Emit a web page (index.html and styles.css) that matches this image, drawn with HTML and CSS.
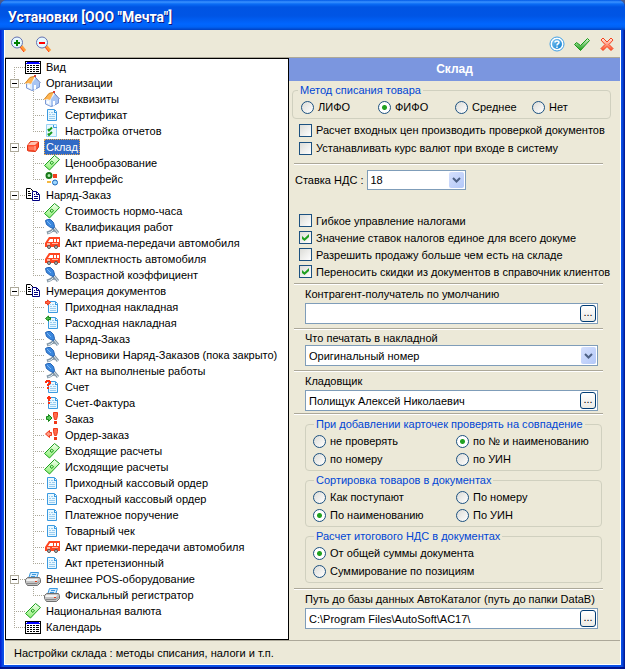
FILE: index.html
```html
<!DOCTYPE html>
<html lang="ru">
<head>
<meta charset="utf-8">
<title>Установки</title>
<link rel="stylesheet" href="styles.css">
</head>
<body>
<svg class="defs" aria-hidden="true">
  <defs>
    <linearGradient id="g-money" x1="0" y1="0" x2="0" y2="1"><stop offset="0" stop-color="#f6fff2"/><stop offset="1" stop-color="#8af070"/></linearGradient>
    <linearGradient id="g-ok" x1="0" y1="0" x2="0" y2="1"><stop offset="0" stop-color="#d8f5d0"/><stop offset="1" stop-color="#179a14"/></linearGradient>
    <linearGradient id="g-no" x1="0" y1="0" x2="0" y2="1"><stop offset="0" stop-color="#fff0ea"/><stop offset="1" stop-color="#ff4a22"/></linearGradient>
    <linearGradient id="g-help" x1="0" y1="0" x2="1" y2="1"><stop offset="0" stop-color="#7cc4f2"/><stop offset="1" stop-color="#0f7ed0"/></linearGradient>
  </defs>
  <symbol id="i-calendar" viewBox="0 0 16 16">
    <path d="M0 2h16v13H0z"/><path fill="#fff" d="M1 5h14v9H1z"/><path fill="#00f" d="M1 3h14v2H1z"/><path fill="#fff" d="M1 3h1v1H1zM14 3h1v1h-1z"/>
    <path d="M2 6h2v1H2zM5 6h2v1H5zM8 6h2v1H8zM11 6h3v1h-3zM2 8h2v1H2zM5 8h2v1H5zM8 8h2v1H8zM11 8h3v1h-3zM2 10h2v1H2zM5 10h2v1H5zM8 10h2v1H8zM11 10h3v1h-3zM2 12h2v1H2zM5 12h2v1H5zM8 12h2v1H8zM11 12h3v1h-3z"/>
  </symbol>
  <symbol id="i-house" viewBox="0 0 16 16">
    <path fill="#e4effd" d="M1 8l5-1 5-5 4 6v4l-7 4-7-3z"/><path fill="#a9c5f2" d="M7 8l4-5 4 5v4l-7 4H7z"/><path fill="none" stroke="#7c98d4" d="M1.500 9v4L7 15.500l7.500-3.500V8"/>
    <path fill="#ffb450" d="M0 8l5-6 5-1-4 8-3-1-2 1z"/><path fill="none" stroke="#d08a30" d="M.500 8L5 2.500l4-1"/><path fill="none" stroke="#6478b4" d="M10 2l5.500 6"/><path fill="#d84030" d="M9 0h2v2H9z"/><path fill="#fff" d="M9 10h2v4l-2 1zM3 10h2v3l-2-1z"/>
  </symbol>
  <symbol id="i-doc" viewBox="0 0 16 16">
    <path fill="#e9f8ff" stroke="#3b9ae0" d="M3.500 2.500h7l2 2v9h-9z"/><path fill="#3b9ae0" d="M10 3h1v2h2v1h-3z"/><path fill="none" stroke="#9bcdf0" d="M5 5.500h1M7 5.500h2M5 7.500h2M8 7.500h3M5 9.500h6M5 11.500h6"/>
  </symbol>
  <symbol id="i-docin" viewBox="0 0 16 16"><use href="#i-doc" x="1" y="0"/><path fill="#ff6848" stroke="#f03818" d="M3.500 1v1.500h-2v2h2V6l3-2.500z"/></symbol>
  <symbol id="i-docout" viewBox="0 0 16 16"><use href="#i-doc" x="1" y="0"/><path fill="#4cc04c" stroke="#168516" d="M4.500 1v1.500h2v2h-2V6l-3-2.500z"/></symbol>
  <symbol id="i-docq" viewBox="0 0 16 16"><use href="#i-doc" x="1" y="0"/><path fill="#ff3010" d="M2 1h4v1h1v3H6v1H5v1H3V5h1V4h1V3H3v1H1V2h1zM3 8h2v2H3z"/></symbol>
  <symbol id="i-docex" viewBox="0 0 16 16"><use href="#i-doc" x="1" y="0"/><path fill="#ff3010" d="M4 1h2v1h1v2H6v2H4V4H3V2h1zM4 7h2v2H4z"/></symbol>
  <symbol id="i-report" viewBox="0 0 16 16"><path fill="#e9f8ff" stroke="#9ad4f5" d="M2.500 1.500h10v12h-10z"/><path fill="none" stroke="#3b9ae0" d="M9.500 2v2.500H13"/><path fill="none" stroke="#189a20" stroke-width="2" d="M4 6l1 1.500 3-3M4 10.500L5 12l3-3"/></symbol>
  <symbol id="i-box" viewBox="0 0 16 16"><path fill="#ff4c2c" stroke="#e03010" d="M2.500 6.500l3-4 8 .500v5l-3 4.500-7-.500-1-.500z"/><path fill="#ffc0ae" d="M3 6l3-3h7l-3 3z"/><path fill="none" stroke="#ffd6ca" d="M10 7v4.500"/><path fill="#ff7558" d="M3 7.500h6V11H4z"/></symbol>
  <symbol id="i-money" viewBox="0 0 16 16"><path fill="url(#g-money)" stroke="#1ca01c" d="M.500 10.500l10-10 5 4-10 10.500z"/><path fill="none" stroke="#1ca01c" d="M7.500 6l2 1.500-1.500 2L6 8z"/></symbol>
  <symbol id="i-parts" viewBox="0 0 16 16"><circle cx="5" cy="4.500" r="2.500" fill="#b4ecb0" stroke="#187a18" stroke-width="2"/><path fill="#f04020" d="M9 3h4v4H9z"/><path fill="#f5b840" d="M3 10h4v2H3z"/><circle cx="11" cy="11.500" r="2.500" fill="#9fd8ff" stroke="#1b66b8"/></symbol>
  <symbol id="i-copy" viewBox="0 0 16 16"><path fill="#fff" stroke="#000" d="M1.500 1.500h4l3 3v7h-7z"/><path fill="none" stroke="#000" d="M3 4.500h2M3 6.500h3M3 8.500h3"/><path fill="#fff" stroke="#000080" d="M7.500 4.500h4l3 3v6h-7z"/><path fill="none" stroke="#000080" d="M11.500 5v2.500H14M9 7.500h1M9 9.500h4M9 11.500h4"/></symbol>
  <symbol id="i-tools" viewBox="0 0 16 16"><path fill="none" stroke="#8497a6" stroke-width="3" d="M9 8l5 6M3 14l3-1 3-2 2 1"/><path fill="none" stroke="#dce7ee" d="M10 9l4 5M4 14l3-1 2-2"/><path fill="#3b88de" stroke="#2262b5" d="M1.500 1.500l2-1h3l3 3 1 4-1 2-3-1-4-3z"/><path fill="none" stroke="#7fb8f5" d="M3 2l4 4"/></symbol>
  <symbol id="i-van" viewBox="0 0 16 16"><path fill="#ff4520" d="M5 2h11v10H1V8z"/><path fill="#fff" d="M6 4h3v3H4zM10 4h2v3h-2zM13 4h2v3h-2z"/><path fill="#ffb6a2" d="M3 8h3v2H3zM8 8h6v1H8z"/><circle cx="5" cy="12" r="1.500" fill="#bbb" stroke="#555"/><circle cx="12" cy="12" r="1.500" fill="#bbb" stroke="#555"/></symbol>
  <symbol id="i-order" viewBox="0 0 16 16"><path fill="#58c858" stroke="#168516" d="M2.500 5.500h2v-2L8 7l-3.500 3.500v-2h-2z"/><path fill="#ff6a4a" stroke="#f03818" d="M9.500 1.500h4v3l-1 4h-2l-1-4z"/><path fill="#f03818" d="M10 10h3v3h-3z"/></symbol>
  <symbol id="i-orderout" viewBox="0 0 16 16"><path fill="#ff9a84" stroke="#f03818" d="M7.500 5.500h-2v-2L1.500 7l4 3.500v-2h2z"/><path fill="#ff6a4a" stroke="#f03818" d="M9.500 1.500h4v3l-1 4h-2l-1-4z"/><path fill="#f03818" d="M10 10h3v3h-3z"/></symbol>
  <symbol id="i-printer" viewBox="0 0 16 16"><path fill="#cfeaff" stroke="#3b9ae0" d="M5.500 1.500h8l-2 6h-8z"/><path stroke="#3b9ae0" d="M7 3.500h4M6 5.500h4"/><path fill="#c5c5c5" stroke="#707070" d="M.500 8.500l2-2h12l1 2v3l-3 3h-10l-2-3z"/><path fill="#f2f2f2" d="M2 8h11l-1 2H1z"/><path fill="none" stroke="#888" d="M2 12.500h10l2-2"/><path fill="#e03818" d="M10 10h2v1h-2z"/></symbol>
  <symbol id="i-zoomin" viewBox="0 0 16 16"><path stroke="#ff9a38" stroke-width="3" d="M10 10l4 5"/><path stroke="#ff3c10" d="M9 11l4 5"/><circle cx="6" cy="6.500" r="5.500" fill="#e6f8ff" stroke="#6572b0"/><path fill="#008000" d="M5 4h2v2h2v2H7v2H5V8H3V6h2z"/></symbol>
  <symbol id="i-zoomout" viewBox="0 0 16 16"><path stroke="#ff9a38" stroke-width="3" d="M10 10l4 5"/><path stroke="#ff3c10" d="M9 11l4 5"/><circle cx="6" cy="6.500" r="5.500" fill="#e6f8ff" stroke="#6572b0"/><path fill="#f00" d="M3 6h6v2H3z"/></symbol>
  <symbol id="i-help" viewBox="0 0 16 16"><circle cx="8" cy="8" r="7" fill="#fff" stroke="#3f9ee2"/><circle cx="8" cy="8" r="5" fill="url(#g-help)"/><path fill="none" stroke="#fff" stroke-width="1.500" d="M6 6.500C6 4.500 10 4.500 10 6.500 10 8 8 7.500 8 9.500M8 10.500V12"/></symbol>
  <symbol id="i-ok" viewBox="0 0 16 16"><path fill="url(#g-ok)" stroke="#169a16" d="M.500 8.500l2-2 4 3 7-7 2 2-9 10z"/></symbol>
  <symbol id="i-no" viewBox="0 0 16 16"><path fill="url(#g-no)" stroke="#f5421c" d="M2 4l2-2 4 4 4-4 2 2-4 4.500 4 4-2 2-4-4-4 4-2-2 4-4z"/></symbol>
</svg>

<div class="window">
  <header class="titlebar"><h1>Установки [ООО "Мечта"]</h1></header>
  <div class="client">
    <div class="toolbar">
      <button class="tool" type="button" aria-label="Развернуть"><svg><use href="#i-zoomin"/></svg></button>
      <button class="tool" type="button" aria-label="Свернуть"><svg><use href="#i-zoomout"/></svg></button>
      <span class="spacer"></span>
      <button class="tool" type="button" aria-label="Справка"><svg><use href="#i-help"/></svg></button>
      <button class="tool" type="button" aria-label="Применить"><svg><use href="#i-ok"/></svg></button>
      <button class="tool" type="button" aria-label="Закрыть"><svg><use href="#i-no"/></svg></button>
    </div>

    <div class="main">
      <nav class="tree">
        <ul>
          <li><div class="row"><svg><use href="#i-calendar"/></svg><span>Вид</span></div></li>
          <li><div class="row"><button class="toggle" type="button" aria-label="Свернуть ветку"></button><svg><use href="#i-house"/></svg><span>Организации</span></div>
            <ul>
              <li><div class="row"><svg><use href="#i-house"/></svg><span>Реквизиты</span></div></li>
              <li><div class="row"><svg><use href="#i-doc"/></svg><span>Сертификат</span></div></li>
              <li><div class="row"><svg><use href="#i-report"/></svg><span>Настройка отчетов</span></div></li>
            </ul>
          </li>
          <li><div class="row"><button class="toggle" type="button" aria-label="Свернуть ветку"></button><svg><use href="#i-box"/></svg><span class="selected">Склад</span></div>
            <ul>
              <li><div class="row"><svg><use href="#i-money"/></svg><span>Ценообразование</span></div></li>
              <li><div class="row"><svg><use href="#i-parts"/></svg><span>Интерфейс</span></div></li>
            </ul>
          </li>
          <li><div class="row"><button class="toggle" type="button" aria-label="Свернуть ветку"></button><svg><use href="#i-copy"/></svg><span>Наряд-Заказ</span></div>
            <ul>
              <li><div class="row"><svg><use href="#i-money"/></svg><span>Стоимость нормо-часа</span></div></li>
              <li><div class="row"><svg><use href="#i-tools"/></svg><span>Квалификация работ</span></div></li>
              <li><div class="row"><svg><use href="#i-van"/></svg><span>Акт приема-передачи автомобиля</span></div></li>
              <li><div class="row"><svg><use href="#i-van"/></svg><span>Комплектность автомобиля</span></div></li>
              <li><div class="row"><svg><use href="#i-tools"/></svg><span>Возрастной коэффициент</span></div></li>
            </ul>
          </li>
          <li><div class="row"><button class="toggle" type="button" aria-label="Свернуть ветку"></button><svg><use href="#i-copy"/></svg><span>Нумерация документов</span></div>
            <ul>
              <li><div class="row"><svg><use href="#i-docin"/></svg><span>Приходная накладная</span></div></li>
              <li><div class="row"><svg><use href="#i-docout"/></svg><span>Расходная накладная</span></div></li>
              <li><div class="row"><svg><use href="#i-tools"/></svg><span>Наряд-Заказ</span></div></li>
              <li><div class="row"><svg><use href="#i-tools"/></svg><span>Черновики Наряд-Заказов (пока закрыто)</span></div></li>
              <li><div class="row"><svg><use href="#i-tools"/></svg><span>Акт на выполненые работы</span></div></li>
              <li><div class="row"><svg><use href="#i-docq"/></svg><span>Счет</span></div></li>
              <li><div class="row"><svg><use href="#i-docex"/></svg><span>Счет-Фактура</span></div></li>
              <li><div class="row"><svg><use href="#i-order"/></svg><span>Заказ</span></div></li>
              <li><div class="row"><svg><use href="#i-orderout"/></svg><span>Ордер-заказ</span></div></li>
              <li><div class="row"><svg><use href="#i-money"/></svg><span>Входящие расчеты</span></div></li>
              <li><div class="row"><svg><use href="#i-money"/></svg><span>Исходящие расчеты</span></div></li>
              <li><div class="row"><svg><use href="#i-doc"/></svg><span>Приходный кассовый ордер</span></div></li>
              <li><div class="row"><svg><use href="#i-doc"/></svg><span>Расходный кассовый ордер</span></div></li>
              <li><div class="row"><svg><use href="#i-doc"/></svg><span>Платежное поручение</span></div></li>
              <li><div class="row"><svg><use href="#i-doc"/></svg><span>Товарный чек</span></div></li>
              <li><div class="row"><svg><use href="#i-van"/></svg><span>Акт приемки-передачи автомобиля</span></div></li>
              <li><div class="row"><svg><use href="#i-doc"/></svg><span>Акт претензионный</span></div></li>
            </ul>
          </li>
          <li><div class="row"><button class="toggle" type="button" aria-label="Свернуть ветку"></button><svg><use href="#i-printer"/></svg><span>Внешнее POS-оборудование</span></div>
            <ul>
              <li><div class="row"><svg><use href="#i-printer"/></svg><span>Фискальный регистратор</span></div></li>
            </ul>
          </li>
          <li><div class="row"><svg><use href="#i-money"/></svg><span>Национальная валюта</span></div></li>
          <li><div class="row"><svg><use href="#i-calendar"/></svg><span>Календарь</span></div></li>
        </ul>
      </nav>

      <form class="panel">
        <h2>Склад</h2>
        <fieldset class="group group-wide">
          <legend>Метод списания товара</legend>
          <div class="options options-four">
            <label><input type="radio" name="method">ЛИФО</label>
            <label><input type="radio" name="method" checked>ФИФО</label>
            <label><input type="radio" name="method">Среднее</label>
            <label><input type="radio" name="method">Нет</label>
          </div>
        </fieldset>
        <div class="checks">
          <label><input type="checkbox">Расчет входных цен производить проверкой документов</label>
          <label><input type="checkbox">Устанавливать курс валют при входе в систему</label>
        </div>
        <hr class="after-checks">
        <div class="rate">
          <label for="vat">Ставка НДС :</label>
          <div class="combo combo-small">
            <select id="vat"><option>18</option></select>
            <span class="arrow"><svg viewBox="0 0 9 6"><path d="M1 1l3.500 3.500L8 1"/></svg></span>
          </div>
        </div>
        <div class="checks checks-tight">
          <label><input type="checkbox">Гибкое управление налогами</label>
          <label><input type="checkbox" checked>Значение ставок налогов единое для всего докуме</label>
          <label><input type="checkbox">Разрешить продажу больше чем есть на складе</label>
          <label><input type="checkbox" checked>Переносить скидки из документов в справочник клиентов</label>
        </div>
        <hr class="after-tight">
        <div class="field">
          <label for="contractor">Контрагент-получатель по умолчанию</label>
          <div class="lookup"><input id="contractor" type="text"><button type="button">...</button></div>
        </div>
        <hr>
        <div class="field field-snug">
          <label for="print">Что печатать в накладной</label>
          <div class="combo">
            <select id="print"><option>Оригинальный номер</option></select>
            <span class="arrow"><svg viewBox="0 0 9 6"><path d="M1 1l3.500 3.500L8 1"/></svg></span>
          </div>
        </div>
        <hr>
        <div class="field">
          <label for="keeper">Кладовщик</label>
          <div class="lookup"><input id="keeper" type="text" value="Полищук Алексей Николаевич"><button type="button">...</button></div>
        </div>
        <hr class="close">
        <div class="groups">
          <fieldset class="group">
            <legend>При добавлении карточек проверять на совпадение</legend>
            <div class="options">
              <label><input type="radio" name="match">не проверять</label>
              <label><input type="radio" name="match" checked>по № и наименованию</label>
              <label><input type="radio" name="match">по номеру</label>
              <label><input type="radio" name="match">по УИН</label>
            </div>
          </fieldset>
          <fieldset class="group">
            <legend>Сортировка товаров в документах</legend>
            <div class="options">
              <label><input type="radio" name="sort">Как поступают</label>
              <label><input type="radio" name="sort">По номеру</label>
              <label><input type="radio" name="sort" checked>По наименованию</label>
              <label><input type="radio" name="sort">По УИН</label>
            </div>
          </fieldset>
          <fieldset class="group">
            <legend>Расчет итогового НДС в документах</legend>
            <div class="options options-one">
              <label><input type="radio" name="total" checked>От общей суммы документа</label>
              <label><input type="radio" name="total">Суммирование по позициям</label>
            </div>
          </fieldset>
        </div>
        <hr>
        <div class="field">
          <label for="path">Путь до базы данных АвтоКаталог (путь до папки DataB)</label>
          <div class="lookup"><input id="path" type="text" value="C:\Program Files\AutoSoft\AC17\"><button type="button">...</button></div>
        </div>
      </form>
    </div>
    <footer class="status">Настройки склада : методы списания, налоги и т.п.</footer>
  </div>
</div>
</body>
</html>
```
FILE: styles.css
```css
* { box-sizing: border-box; }
body {
  margin: 0;
  background: #4a5a8a;
  color: #000;
  font: 11px/14px "Liberation Sans", Arial, sans-serif;
}
.defs { position: absolute; width: 0; height: 0; }
.window {
  display: flex;
  flex-direction: column;
  min-height: 100vh;
  padding: 0 4px 4px;
  border-radius: 7px 7px 0 0;
  background: linear-gradient(90deg, #0019cf 0, #0a50e8 3px, #0a50e8 calc(100% - 3px), #00138c 100%);
  box-shadow: inset 0 -2px #00138c;
}
.titlebar {
  display: flex;
  align-items: center;
  height: 30px;
  margin: 0 -4px;
  padding: 4px 8px 0;
  border-radius: 7px 7px 0 0;
  background: linear-gradient(#0058e6 0, #3b92ff 2px, #0a6cf5 4px, #0054e3 7px, #0055e5 16px, #0066ff 24px, #0062f5 27px, #0040c0 30px);
}
h1 {
  margin: 0;
  color: #fff;
  font: bold 14px/18px Roboto, sans-serif;
  text-shadow: 1px 1px #0a1883;
}
.client {
  flex: 1;
  display: flex;
  flex-direction: column;
  border: solid #fff;
  border-width: 0 1px 1px;
  background: #ece9d8;
}
.toolbar {
  display: flex;
  align-items: center;
  gap: 9px;
  height: 28px;
  padding: 0 5px 0 6px;
  border-bottom: 1px solid #aca899;
}
.spacer { flex: 1; }
.tool { padding: 0; border: 0; background: none; }
.tool svg, .row svg { display: block; width: 16px; height: 16px; flex: none; }

.main { flex: 1; display: flex; }
.tree {
  width: 284px;
  flex: none;
  padding-bottom: 4px;
  border: 1px solid #000;
  background: #fff;
}
.tree ul { margin: 0; padding: 0; list-style: none; }
.tree li ul { margin-left: 19px; }
.tree li {
  background: repeating-linear-gradient(#aca899 0 1px, transparent 1px 2px) 8px 0 / 1px 100% no-repeat;
}
.tree li:last-child { background-size: 1px 9px; }
.tree > ul > li:first-child { background-position: 8px 8px; background-size: 1px 8px; }
.row {
  display: flex;
  align-items: center;
  height: 16px;
  padding-left: 19px;
  background: repeating-linear-gradient(90deg, #aca899 0 1px, transparent 1px 2px) 8px 8px / 11px 1px no-repeat;
}
.row:has(.toggle) { padding-left: 4px; }
.toggle {
  width: 9px;
  height: 9px;
  margin-right: 6px;
  padding: 0;
  border: 1px solid #aca899;
  background: linear-gradient(#000, #000) center / 5px 1px no-repeat #fff;
}
.row span { margin-left: 3px; padding: 0 2px; line-height: 16px; white-space: nowrap; }
.row .selected { background: #316ac5; color: #fff; outline: 1px dotted #e8a850; outline-offset: -1px; }

.panel { flex: 1; min-width: 0; }
h2 {
  margin: 0;
  background: #7b96df;
  color: #fff;
  font: bold 12px/23px "Liberation Sans", Arial, sans-serif;
  text-align: center;
}
label { white-space: nowrap; }
.group {
  min-width: 0;
  margin: 0;
  padding: 1px 7px 2px;
  border: 1px solid #d0d0bf;
  border-radius: 4px;
}
.group-wide { margin: 2px 9px 0 3px; padding: 1px 8px 2px; }
legend { margin-left: 1px; padding: 0 2px; color: #0046d5; }
.group-wide legend { margin-left: -3px; }
.options { display: grid; grid-template-columns: 143px 1fr; }
.options-four { grid-template-columns: repeat(3, 77px) 1fr; }
.options-one { grid-template-columns: 1fr; }
.options label, .checks label { display: flex; align-items: center; height: 18px; gap: 4px; }
input[type="radio"], input[type="checkbox"] {
  appearance: none;
  width: 13px;
  height: 13px;
  flex: none;
  margin: 0;
  border: 1px solid #1c5180;
  background: linear-gradient(135deg, #dcdcd7, #fff);
}
input[type="radio"] { border-radius: 50%; }
input[type="radio"]:checked { background: radial-gradient(circle, #21a121 0 2px, #fff 3px); }
input[type="checkbox"]:checked::before {
  content: "";
  display: block;
  width: 7px;
  height: 7px;
  margin: 2px;
  background: #21a121;
  clip-path: polygon(0 28%, 36% 60%, 100% 0, 100% 42%, 36% 100%, 0 70%);
}
.checks { margin: 2px 0 0 10px; }
.checks-tight { margin-top: 22px; }
.checks-tight label { height: 17px; }
hr {
  height: 2px;
  margin: 4px 17px 0 5px;
  border: solid;
  border-width: 1px 0;
  border-color: #aca899 #fff #fff;
}
hr.after-checks { margin-top: 6px; }
hr.after-tight { margin-top: 3px; }
hr.close { margin-top: 2px; }
.rate { display: flex; align-items: center; gap: 3px; margin: 5px 0 0 6px; }
.field { display: flex; flex-direction: column; gap: 2px; margin: 2px 22px 0 16px; }
.field-snug { gap: 0; margin-top: 1px; }
.combo, .lookup { position: relative; height: 21px; border: 1px solid #7f9db9; background: #fff; }
.combo-small { width: 99px; height: 20px; }
select, input[type="text"] {
  appearance: none;
  display: block;
  width: 100%;
  height: 100%;
  margin: 0;
  padding: 0 20px 0 3px;
  border: 0;
  outline: 0;
  background: none;
  color: #000;
  font: inherit;
}
.arrow {
  position: absolute;
  top: 1px;
  right: 1px;
  bottom: 1px;
  width: 15px;
  display: grid;
  place-items: center;
  border-radius: 2px;
  background: linear-gradient(135deg, #d5e0fd, #b3c8f8);
  pointer-events: none;
}
.arrow svg { width: 9px; height: 6px; }
.arrow path { fill: none; stroke: #4d6185; stroke-width: 2; }
.lookup button {
  position: absolute;
  top: 1px;
  right: 1px;
  bottom: 1px;
  width: 16px;
  padding: 0 0 4px;
  border: 1px solid #003c74;
  border-radius: 3px;
  background: linear-gradient(#fff, #ecebe5);
  font: inherit;
  line-height: 10px;
}
.groups { display: grid; gap: 2px; margin: 2px 18px 0 16px; }
.groups + hr { margin-top: 5px; }
.status { height: 24px; padding: 0 9px; border-top: 1px solid #aca899; line-height: 24px; }
```
